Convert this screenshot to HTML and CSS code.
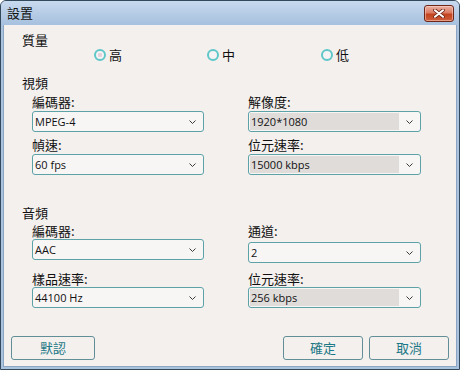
FILE: index.html
```html
<!DOCTYPE html>
<html lang="zh-Hant">
<head>
<meta charset="utf-8">
<title>設置</title>
<link rel="stylesheet" href="styles.css">
</head>
<body>
<div class="window">
  <div class="titlebar">
    <span class="title">設置</span>
    <button class="close" aria-label="關閉">
      <svg width="12" height="9" viewBox="0 0 12 9">
        <path d="M2 1.2 L10 7.8 M10 1.2 L2 7.8" stroke="#6a2416" stroke-width="3.6" stroke-linecap="round"/>
        <path d="M2 1.2 L10 7.8 M10 1.2 L2 7.8" stroke="#ffffff" stroke-width="2" stroke-linecap="round"/>
      </svg>
    </button>
  </div>
  <div class="body">
    <div class="group-title first">質量</div>
    <div class="radios">
      <label class="radio checked"><span class="dot"></span>高</label>
      <label class="radio"><span class="dot"></span>中</label>
      <label class="radio"><span class="dot"></span>低</label>
    </div>

    <div class="group-title">視頻</div>
    <div class="grid">
      <div class="col">
        <div class="field">
          <div class="lbl">編碼器:</div>
          <div class="dd"><span class="val">MPEG-4</span><span class="arrow"><svg width="7" height="4" viewBox="0 0 7 4"><path d="M0.5 0.5 L3.5 3.5 L6.5 0.5" fill="none" stroke="#3a3a3a" stroke-width="1"/></svg></span></div>
        </div>
        <div class="field">
          <div class="lbl">幀速:</div>
          <div class="dd"><span class="val">60 fps</span><span class="arrow"><svg width="7" height="4" viewBox="0 0 7 4"><path d="M0.5 0.5 L3.5 3.5 L6.5 0.5" fill="none" stroke="#3a3a3a" stroke-width="1"/></svg></span></div>
        </div>
      </div>
      <div class="col">
        <div class="field">
          <div class="lbl">解像度:</div>
          <div class="dd"><span class="val fill">1920*1080</span><span class="arrow"><svg width="7" height="4" viewBox="0 0 7 4"><path d="M0.5 0.5 L3.5 3.5 L6.5 0.5" fill="none" stroke="#3a3a3a" stroke-width="1"/></svg></span></div>
        </div>
        <div class="field">
          <div class="lbl">位元速率:</div>
          <div class="dd"><span class="val fill">15000 kbps</span><span class="arrow"><svg width="7" height="4" viewBox="0 0 7 4"><path d="M0.5 0.5 L3.5 3.5 L6.5 0.5" fill="none" stroke="#3a3a3a" stroke-width="1"/></svg></span></div>
        </div>
      </div>
    </div>

    <div class="group-title audio-title">音頻</div>
    <div class="grid audio">
      <div class="col">
        <div class="field">
          <div class="lbl">編碼器:</div>
          <div class="dd tight"><span class="val">AAC</span><span class="arrow"><svg width="7" height="4" viewBox="0 0 7 4"><path d="M0.5 0.5 L3.5 3.5 L6.5 0.5" fill="none" stroke="#3a3a3a" stroke-width="1"/></svg></span></div>
        </div>
        <div class="field wide-gap">
          <div class="lbl">樣品速率:</div>
          <div class="dd tight"><span class="val">44100 Hz</span><span class="arrow"><svg width="7" height="4" viewBox="0 0 7 4"><path d="M0.5 0.5 L3.5 3.5 L6.5 0.5" fill="none" stroke="#3a3a3a" stroke-width="1"/></svg></span></div>
        </div>
      </div>
      <div class="col">
        <div class="field">
          <div class="lbl">通道:</div>
          <div class="dd loose"><span class="val">2</span><span class="arrow"><svg width="7" height="4" viewBox="0 0 7 4"><path d="M0.5 0.5 L3.5 3.5 L6.5 0.5" fill="none" stroke="#3a3a3a" stroke-width="1"/></svg></span></div>
        </div>
        <div class="field mid-gap">
          <div class="lbl">位元速率:</div>
          <div class="dd tight"><span class="val fill">256 kbps</span><span class="arrow"><svg width="7" height="4" viewBox="0 0 7 4"><path d="M0.5 0.5 L3.5 3.5 L6.5 0.5" fill="none" stroke="#3a3a3a" stroke-width="1"/></svg></span></div>
        </div>
      </div>
    </div>

    <div class="footer">
      <button class="btn btn-default">默認</button>
      <button class="btn">確定</button>
      <button class="btn">取消</button>
    </div>
  </div>
</div>
</body>
</html>
```

FILE: styles.css
```css
html, body {
  margin: 0;
  padding: 0;
  background: #ffffff;
}

body {
  font-family: "Noto Sans CJK TC", "Noto Sans", sans-serif;
  color: #111;
}

.window {
  width: 460px;
  height: 370px;
  box-sizing: border-box;
  border: 1px solid #34495c;
  border-radius: 6px 6px 0 0;
  background: #a9c3df;
  display: flex;
  flex-direction: column;
  overflow: hidden;
}

.titlebar {
  height: 24px;
  flex: none;
  display: flex;
  align-items: center;
  padding: 0 5px 0 6px;
  background: linear-gradient(#c8daee, #a6c0de);
}

.title {
  font-size: 13px;
  line-height: 16px;
  color: #111;
}

.close {
  margin-left: auto;
  width: 30px;
  height: 17px;
  padding: 0;
  box-sizing: border-box;
  border: 1px solid #6e2618;
  border-radius: 3px;
  background: linear-gradient(#eab1a2 0%, #dc7b63 45%, #c2441f 55%, #cf5f3c 100%);
  display: flex;
  align-items: center;
  justify-content: center;
  box-shadow: inset 0 0 0 1px rgba(255, 220, 210, 0.5);
}

.body {
  flex: 1;
  margin: 0 2px 2px;
  background: #f4f0ee;
  display: flex;
  flex-direction: column;
  padding-top: 7px;
  box-shadow: inset 1px 0 0 #8aa6c2, inset -1px 0 0 #8aa6c2, inset 0 -1px 0 #8aa6c2;
}

.group-title {
  font-size: 13px;
  line-height: 16px;
  margin: 12px 0 0 19px;
}

.group-title.first {
  margin-top: 0;
}

.group-title.audio-title {
  margin-top: 30px;
}

.radios {
  display: grid;
  grid-template-columns: 113px 114px auto;
  margin: -1px 0 0 91px;
  height: 16px;
}

.radio {
  display: flex;
  align-items: center;
  gap: 3px;
  font-size: 13px;
  line-height: 16px;
}

.dot {
  width: 12px;
  height: 12px;
  box-sizing: border-box;
  border: 2.5px solid #5fc7c8;
  border-radius: 50%;
  background: #f7f3f4;
}

.radio.checked .dot {
  background: radial-gradient(circle, #e6d2da 0 2px, #f7f3f4 2.5px);
}

.grid {
  display: grid;
  grid-template-columns: 172px 173px;
  column-gap: 44px;
  margin: 3px 0 0 29px;
}

.grid.audio {
  margin-top: 2px;
}

.col {
  display: flex;
  flex-direction: column;
}

.field + .field {
  margin-top: 5px;
}

.field.wide-gap {
  margin-top: 11px;
}

.field.mid-gap {
  margin-top: 8px;
}

.lbl {
  font-size: 13px;
  line-height: 16px;
}

.dd {
  margin-top: 1px;
  height: 21px;
  box-sizing: border-box;
  border: 1px solid #5ca2a7;
  border-radius: 3px;
  background: #f8f6f5;
  display: flex;
  padding: 1px;
}

.dd.tight {
  margin-top: 0;
}

.dd.loose {
  margin-top: 3px;
}

.val {
  flex: 1;
  font-family: "Open Sans", "Noto Sans", sans-serif;
  font-size: 11px;
  line-height: 17px;
  padding-left: 1px;
  color: #111;
  white-space: nowrap;
}

.val.fill {
  background: #dfdcda;
}

.arrow {
  width: 20px;
  flex: none;
  display: flex;
  align-items: center;
  justify-content: center;
}

.footer {
  margin-top: auto;
  display: flex;
  gap: 6px;
  padding: 0 8px 7px;
}

.btn {
  width: 80px;
  height: 24px;
  box-sizing: border-box;
  border: 1px solid #628f97;
  border-radius: 3px;
  background: #f4f0ee;
  color: #1c7886;
  font-family: "Noto Sans CJK TC", "Noto Sans", sans-serif;
  font-size: 13px;
  line-height: 16px;
  padding: 0;
}

.btn-default {
  width: 84px;
  margin-right: auto;
}
```
